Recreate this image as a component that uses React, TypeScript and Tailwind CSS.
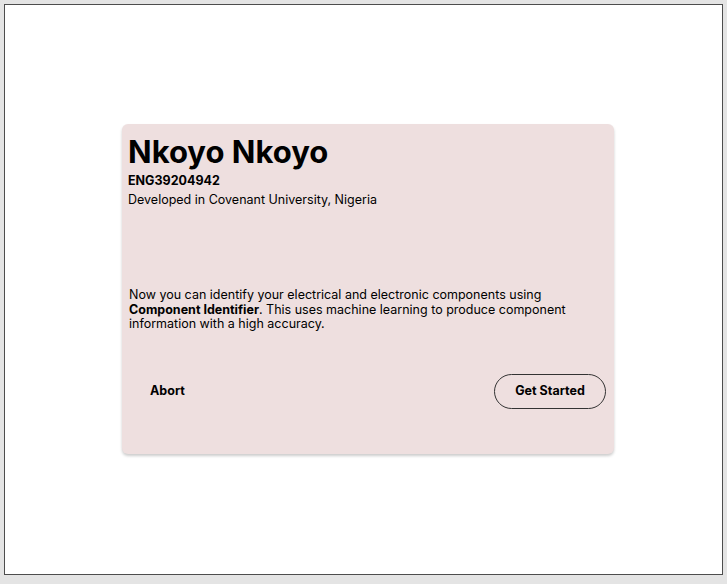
export default function App() {
  return (
    <div className="h-[584px] w-full bg-[#e4e4e4] p-[4px] font-['Inter',sans-serif] text-black">
      <div className="h-[571px] w-[719px] border border-[#4d4d4d] bg-white">
        <div className="ml-[117px] mt-[119px] flex h-[330px] w-[492px] flex-col rounded-[6px] bg-[#eedfdf] p-[6px] shadow-[0_2px_3px_rgba(0,0,0,0.2)]">
          <h1 className="text-[31px] font-bold leading-[43px]">Nkoyo Nkoyo</h1>
          <p className="text-[12.5px] font-bold leading-[16px]">ENG39204942</p>
          <p className="mt-[3px] text-[12.5px] leading-[16px]">Developed in Covenant University, Nigeria</p>
          <p className="ml-[1px] mt-[80px] text-[12.5px] leading-[14.5px]">
            Now you can identify your electrical and electronic components using{' '}
            <span className="font-bold">Component Identifier</span>. This uses machine learning to produce component
            information with a high accuracy.
          </p>
          <div className="mt-[42px] flex items-center justify-between pr-[2px]">
            <button type="button" className="h-[34px] px-[22px] text-[12.5px] font-bold">
              Abort
            </button>
            <button
              type="button"
              className="h-[35px] w-[112px] rounded-full border border-[#333] text-[12.5px] font-bold"
            >
              Get Started
            </button>
          </div>
        </div>
      </div>
    </div>
  )
}
